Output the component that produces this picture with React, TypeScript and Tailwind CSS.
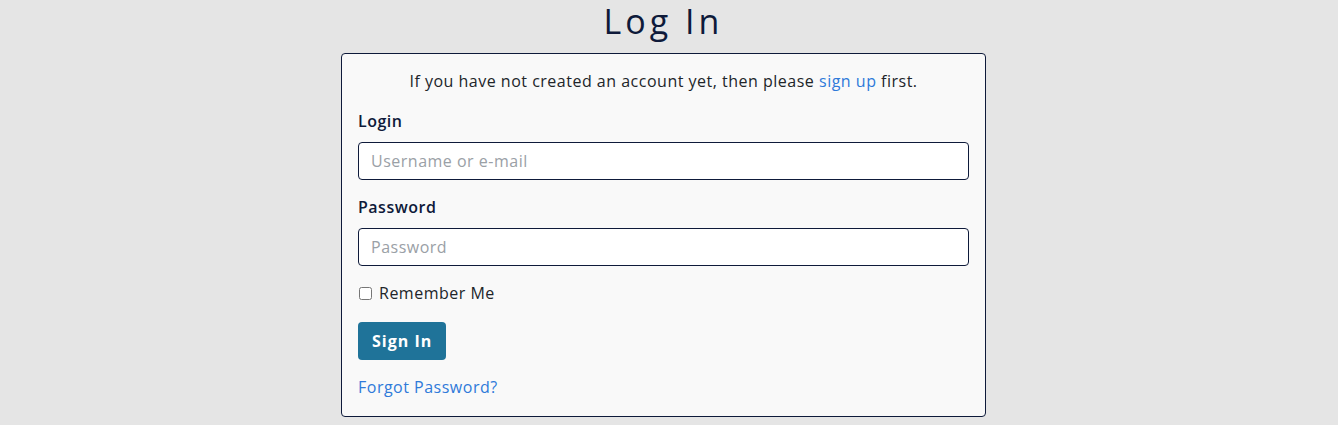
import React from 'react';

const App: React.FC = () => {
  return (
    <div className="min-h-[425px] bg-[#e5e5e5] pr-[11px] pt-[1px] font-['Open_Sans',sans-serif] text-[#212529] tracking-[0.5px]">
      <h1 className="text-center text-[34px] leading-[40px] tracking-[4px] text-[#0e1a3a] mb-[12px]">
        Log In
      </h1>
      <div className="mx-auto w-[645px] rounded-[4px] border border-[#0e1a3a] bg-[#f9f9f9] px-[16px] pt-[15px] pb-[17px]">
        <p className="text-center text-[16px] leading-[24px] mb-[16px]">
          If you have not created an account yet, then please{' '}
          <a href="#" className="text-[#2f7ad9]">sign up</a> first.
        </p>

        <label className="block text-[16px] leading-[24px] font-semibold text-[#0e1a3a] mb-[9px]">Login</label>
        <input
          type="text"
          placeholder="Username or e-mail"
          className="block w-full h-[38px] rounded-[4px] border border-[#0e1a3a] bg-white px-[12px] text-[16px] placeholder:text-[#9aa0a6] mb-[15px]"
        />

        <label className="block text-[16px] leading-[24px] font-semibold text-[#0e1a3a] mb-[9px]">Password</label>
        <input
          type="password"
          placeholder="Password"
          className="block w-full h-[38px] rounded-[4px] border border-[#0e1a3a] bg-white px-[12px] text-[16px] placeholder:text-[#9aa0a6] mb-[15px]"
        />

        <label className="flex items-center gap-[7px] text-[16px] leading-[24px] mb-[17px]">
          <input type="checkbox" className="w-[13px] h-[13px] ml-[1px]" />
          Remember Me
        </label>

        <button className="h-[38px] rounded-[4px] bg-[#1f7399] px-[14px] text-[16px] font-bold tracking-[1px] text-white mb-[15px]">
          Sign In
        </button>

        <a href="#" className="block text-[16px] leading-[24px] text-[#2f7ad9]">Forgot Password?</a>
      </div>
    </div>
  );
};

export default App;
